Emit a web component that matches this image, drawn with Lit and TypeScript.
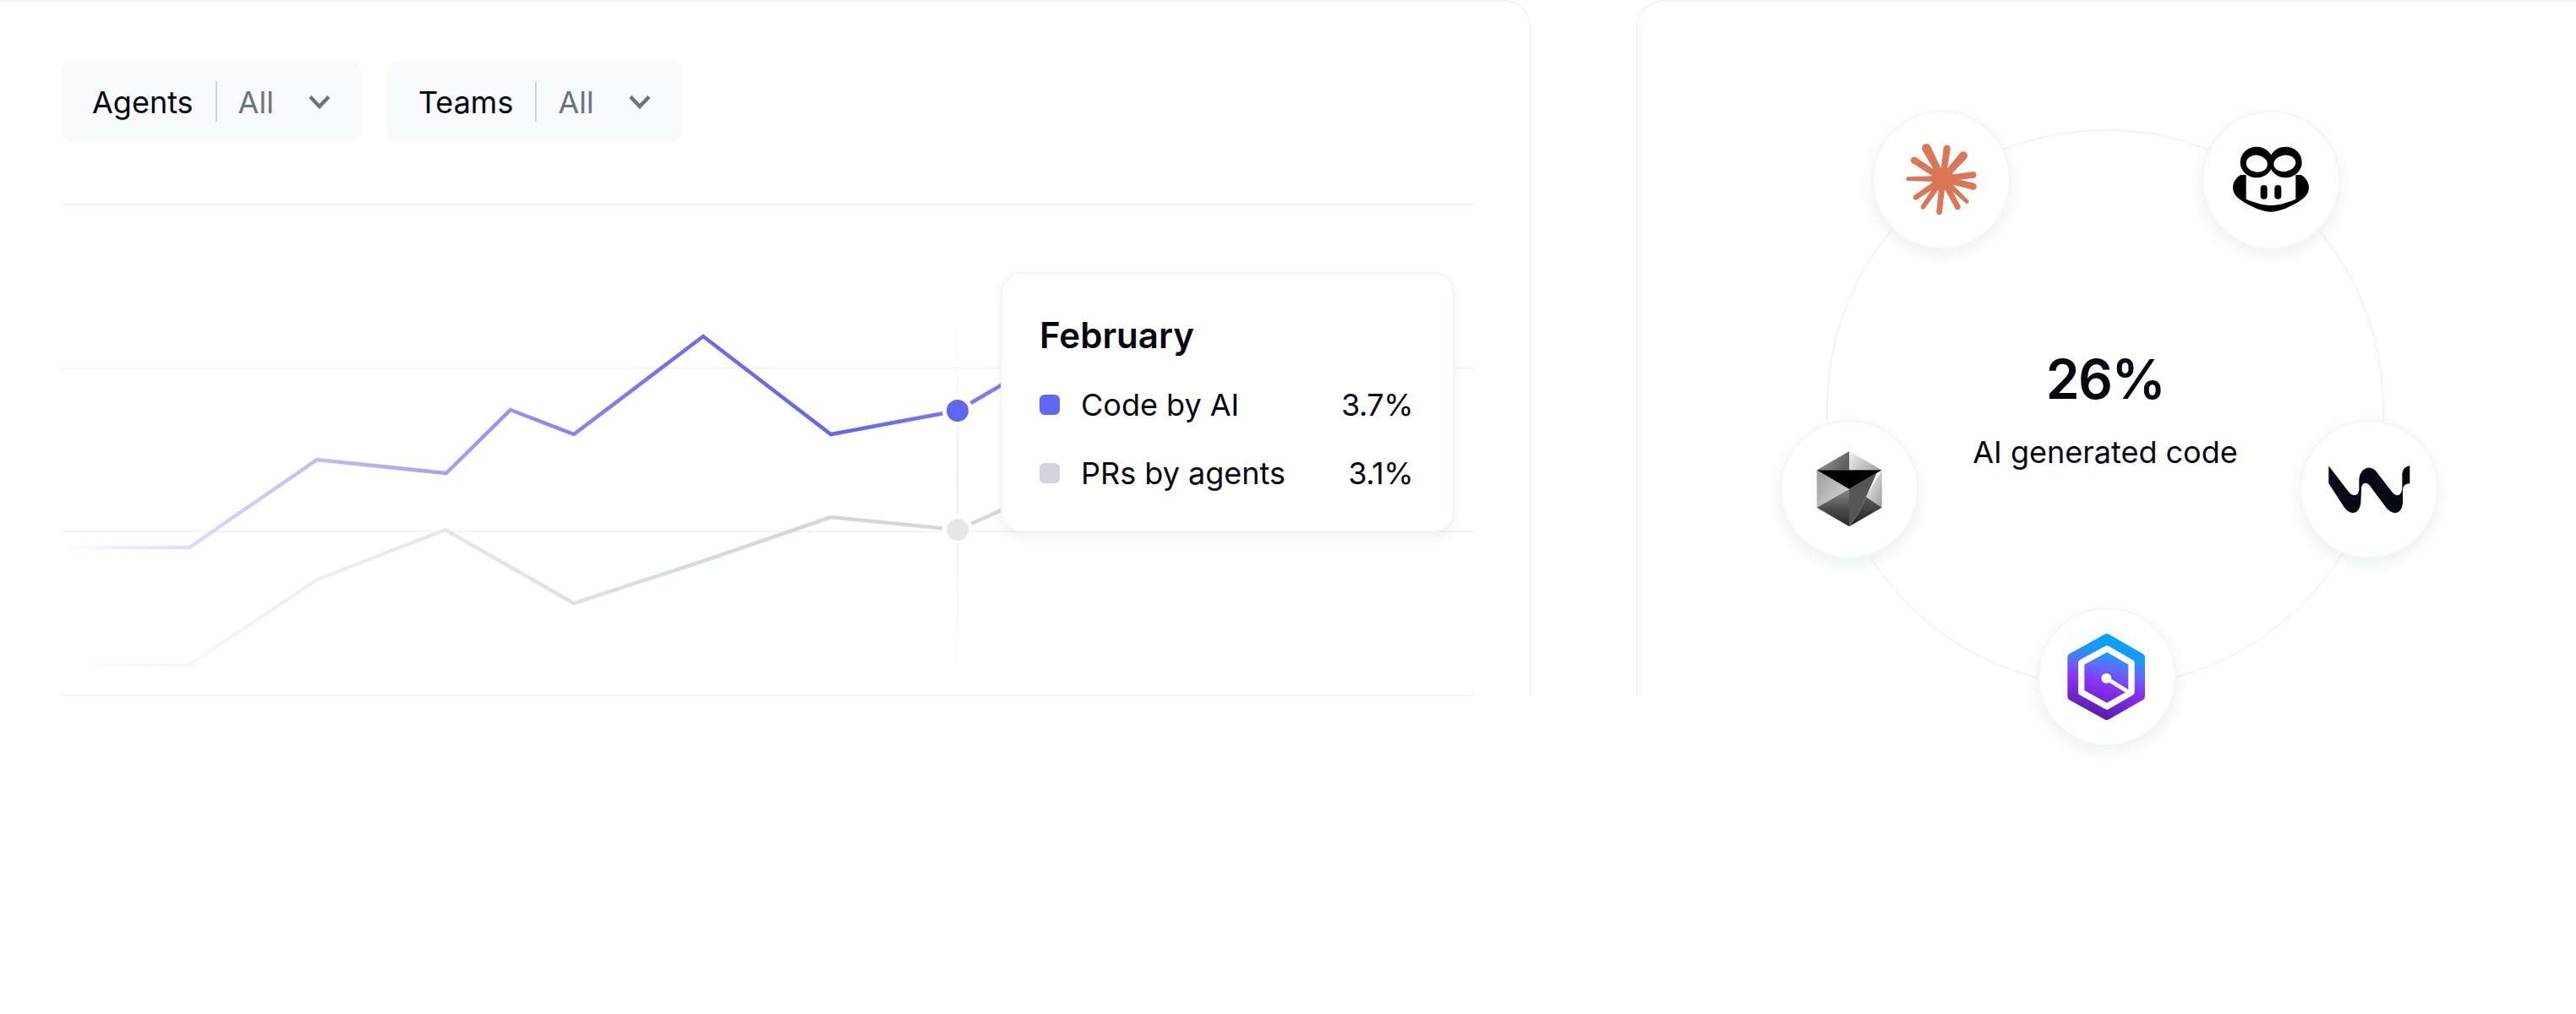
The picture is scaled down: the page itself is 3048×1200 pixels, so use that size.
import { LitElement, html, css, svg } from "lit";
import { customElement } from "lit/decorators.js";

const X0 = 72;
const Y0 = 241;
const pts = (a: number[][]) => a.map(([x, y]) => `${x - X0},${y - Y0}`).join(" ");

const purple = [[72,648],[224,648],[375,544],[528,560],[604,485],[679,514],[832,398],[983,514],[1133,486],[1260,412]];
const gray = [[72,787],[224,787],[375,686],[527,627],[679,714],[832,664],[983,612],[1133,627],[1260,570]];

const stops = (a: [number, string][]) =>
  a.map(([x, c]) => svg`<stop offset=${(x - 72) / 1200} stop-color=${c}></stop>`);

const rays: [number, number, number][] = [
  [297,197,16],[370,198,12],[428,224,15],[463,292,11],[463,333,12],[441,387,7],
  [408,406,10],[343,423,10],[285,406,8],[259,372,9],[232,306,7],[254,240,12],
];
const CX = 355, CY = 306;
function ray([tx, ty, w]: [number, number, number]) {
  const dx = tx - CX, dy = ty - CY;
  const l = Math.hypot(dx, dy);
  const nx = -dy / l, ny = dx / l;
  const b = 11;
  const d = `M${CX + nx * b} ${CY + ny * b}L${tx + nx * w} ${ty + ny * w}L${tx - nx * w} ${ty - ny * w}L${CX - nx * b} ${CY - ny * b}Z`;
  return svg`<path d=${d}></path><circle cx=${tx} cy=${ty} r=${w}></circle>`;
}

const claude = svg`<svg class="ic" viewBox="110 70 480 480" fill="#d97757">${rays.map(ray)}<circle cx="355" cy="306" r="40"></circle></svg>`;

const copilot = svg`<svg class="ic" viewBox="80 70 480 480">
  <path fill="#000" d="M212 292C195 303 185 320 185 338C185 365 212 383 235 395C265 412 295 423 320 423C345 423 375 412 405 395C428 383 455 365 455 338C455 320 445 303 428 292Z"></path>
  <path fill="#fff" d="M232 260L232 378C265 392 295 400 320 400C345 400 375 392 408 378L408 260Z"></path>
  <ellipse cx="269" cy="247" rx="58" ry="55" fill="#000"></ellipse>
  <ellipse cx="372" cy="247" rx="58" ry="55" fill="#000"></ellipse>
  <ellipse cx="270" cy="252" rx="38" ry="30" fill="#fff" transform="rotate(8 270 252)"></ellipse>
  <ellipse cx="369" cy="251" rx="39" ry="29" fill="#fff" transform="rotate(-8 369 251)"></ellipse>
  <rect x="283" y="328" width="24" height="50" rx="12" fill="#000"></rect>
  <rect x="333" y="328" width="24" height="50" rx="12" fill="#000"></rect>
</svg>`;

const cube = svg`<svg class="ic" viewBox="55 58 480 480">
  <defs>
    <linearGradient id="c1" x1="0" y1="0" x2="1" y2="0.4"><stop offset="0" stop-color="#a8a8a8"></stop><stop offset="1" stop-color="#5f5f5f"></stop></linearGradient>
    <linearGradient id="c2" x1="0" y1="0" x2="1" y2="0.4"><stop offset="0" stop-color="#f2f2f2"></stop><stop offset="1" stop-color="#a9a9a9"></stop></linearGradient>
    <linearGradient id="c3" x1="0" y1="0" x2="1" y2="1"><stop offset="0" stop-color="#9a9a9a"></stop><stop offset="1" stop-color="#dcdcdc"></stop></linearGradient>
    <linearGradient id="c4" x1="0" y1="0" x2="0" y2="1"><stop offset="0" stop-color="#8a8a8a"></stop><stop offset="0.55" stop-color="#4a4a4a"></stop><stop offset="1" stop-color="#2a2a2a"></stop></linearGradient>
    <linearGradient id="c5" x1="0" y1="0" x2="1" y2="1"><stop offset="0" stop-color="#f4f4f4"></stop><stop offset="1" stop-color="#9c9c9c"></stop></linearGradient>
    <linearGradient id="c6" x1="0" y1="0" x2="0" y2="1"><stop offset="0" stop-color="#5a5a5a"></stop><stop offset="1" stop-color="#1f1f1f"></stop></linearGradient>
  </defs>
  <polygon points="295,163 180,230 295,230" fill="url(#c1)"></polygon>
  <polygon points="295,163 411,230 295,230" fill="url(#c2)"></polygon>
  <polygon points="180,230 180,363 295,297" fill="url(#c3)"></polygon>
  <polygon points="180,363 295,297 295,430" fill="url(#c4)"></polygon>
  <polygon points="411,230 411,363 355,325" fill="url(#c5)"></polygon>
  <polygon points="355,325 411,363 295,430 330,380" fill="url(#c6)"></polygon>
  <polygon points="295,297 393,240 355,325 330,380 295,430" fill="#565656"></polygon>
  <polygon points="180,230 411,230 295,297" fill="#000"></polygon>
</svg>`;

const windsurf = svg`<svg class="ic" viewBox="70 58 480 480">
  <path fill="#050a14" d="M167 215L235 303C248 322 270 328 275 300L275 262C278 225 315 205 340 240L392 308C405 325 425 325 428 295L428 245C430 225 440 217 455 215L455 278C440 278 432 285 430 300L430 345C428 385 395 395 370 362L318 292C305 270 283 270 283 300L281 345C278 385 245 395 222 362L167 277Z"></path>
</svg>`;

const hex = svg`<svg class="ic" viewBox="100 63 480 480">
  <defs>
    <linearGradient id="h1" gradientUnits="userSpaceOnUse" x1="385" y1="165" x2="315" y2="455">
      <stop offset="0" stop-color="#00a4f7"></stop>
      <stop offset="0.22" stop-color="#1f96fb"></stop>
      <stop offset="0.38" stop-color="#5f6cf8"></stop>
      <stop offset="0.6" stop-color="#8a2ff0"></stop>
      <stop offset="1" stop-color="#561ba6"></stop>
    </linearGradient>
  </defs>
  <path d="M340 165L460 234L460 372L340 441L215 372L215 234Z" fill="url(#h1)" stroke="url(#h1)" stroke-width="30" stroke-linejoin="round"></path>
  <path d="M340 203L427 253L427 358L340 408L249 358L249 253Z" fill="none" stroke="#fff" stroke-width="22" stroke-linejoin="round"></path>
  <line x1="338" y1="308" x2="418" y2="358" stroke="#fff" stroke-width="14"></line>
  <circle cx="338" cy="308" r="18" fill="#fff"></circle>
</svg>`;

const chevron = html`<svg class="chev" viewBox="0 0 26 17" fill="none"><path d="M2 2.5L13 14L24 2.5" stroke="#6b7280" stroke-width="4.4"></path></svg>`;

@customElement("app-root")
export class AppRoot extends LitElement {
  static styles = css`
    :host { display: block; width: 3048px; height: 1200px; background: #fff; color: #030712; font-family: Inter, "Noto Sans", sans-serif; overflow: hidden; }
    .page { display: flex; align-items: flex-start; gap: 124px; }
    .card { box-sizing: border-box; height: 824px; border-top: 2px solid #f3f4f6; }
    .left { width: 1812px; border-right: 2px solid #f3f4f6; border-top-right-radius: 32px; padding: 69px 0 0 72px; }
    .right { flex: 1; border-left: 2px solid #f3f4f6; border-top-left-radius: 32px; padding: 151px 0 0 223px; }
    .filters { display: flex; gap: 31px; }
    .chip { display: flex; align-items: center; height: 97px; box-sizing: border-box; padding: 2px 36px 0 37px; background: #f9fafb; border-radius: 14px; font-size: 36px; line-height: 48px; }
    .chip .sep { width: 2px; height: 48px; margin: -2px 25px 0 26px; background: #d1d5db; }
    .chip .val { color: #6b7280; }
    .chev { width: 26px; height: 17px; margin-left: 41px; }
    .chart { position: relative; width: 1671px; height: 584px; margin-top: 73px; }
    .chart > svg { display: block; }
    .tip { position: absolute; left: 1112px; top: 81px; width: 537px; height: 308px; box-sizing: border-box; padding: 45px 47px 0 44px; background: #fff; border: 2px solid #f3f4f6; border-radius: 24px; box-shadow: 0 6px 14px rgba(17,24,39,.06); }
    .tip h3 { margin: 0; font-size: 42px; line-height: 56px; font-weight: 600; }
    .row { display: flex; align-items: center; font-size: 36px; line-height: 48px; }
    .row.a { margin-top: 30px; }
    .row.b { margin-top: 33px; }
    .sw { width: 24px; height: 24px; border-radius: 6px; margin-right: 25px; }
    .row .num { margin-left: auto; letter-spacing: -0.5px; }
    .diagram { position: relative; width: 660px; height: 660px; box-sizing: border-box; border: 2px solid #f3f4f6; border-radius: 50%; display: flex; flex-direction: column; align-items: center; justify-content: center; }
    .big { font-size: 64px; line-height: 80px; font-weight: 600; letter-spacing: -1.6px; margin-top: 2px; }
    .sub { font-size: 36px; line-height: 48px; margin-top: 22px; }
    .node { position: absolute; width: 164px; height: 164px; box-sizing: border-box; border-radius: 50%; background: #fff; border: 2px solid #f5f5f6; box-shadow: 0 6px 18px rgba(17,24,39,.07); display: flex; }
    .ic { position: absolute; left: 0; top: 0; width: 160px; height: 160px; }
    .n1 { left: 52px; top: -24px; }
    .n2 { left: 442px; top: -24px; }
    .n3 { left: -57px; top: 342px; }
    .n4 { left: 558px; top: 342px; }
    .n5 { left: 248px; top: 564px; }
  `;

  render() {
    const grid = [1, 194.5, 388, 582];
    return html`<div class="page">
      <section class="card left">
        <div class="filters">
          <div class="chip"><span>Agents</span><span class="sep"></span><span class="val">All</span>${chevron}</div>
          <div class="chip"><span>Teams</span><span class="sep"></span><span class="val">All</span>${chevron}</div>
        </div>
        <div class="chart">
          <svg width="1671" height="584" viewBox="0 0 1671 584" fill="none">
            <defs>
              <linearGradient id="gp" gradientUnits="userSpaceOnUse" x1="0" y1="0" x2="1200" y2="0">
                ${stops([[72,"#ffffff"],[224,"#dddcfa"],[375,"#c3bbf5"],[528,"#a99ff0"],[604,"#9a90ee"],[832,"#6f6aea"],[1000,"#6366f1"],[1272,"#8f88f2"]])}
              </linearGradient>
              <linearGradient id="gg" gradientUnits="userSpaceOnUse" x1="0" y1="0" x2="1200" y2="0">
                ${stops([[72,"#ffffff"],[224,"#f6f6f6"],[375,"#f0f0f0"],[527,"#e7e7e7"],[679,"#e0e1e1"],[832,"#d9dada"],[983,"#d5d6d6"],[1272,"#d8d9db"]])}
              </linearGradient>
              <linearGradient id="gc" x1="0" y1="0" x2="0" y2="1">
                <stop offset="0" stop-color="#f3f4f6" stop-opacity="0"></stop>
                <stop offset="0.45" stop-color="#eceef1"></stop>
                <stop offset="1" stop-color="#f3f4f6" stop-opacity="0"></stop>
              </linearGradient>
            </defs>
            ${grid.map((y) => svg`<line x1="0" x2="1671" y1=${y} y2=${y} stroke="#f3f4f6" stroke-width="2"></line>`)}
            <rect x="1059.5" y="130" width="3" height="440" fill="url(#gc)"></rect>
            <polyline points=${pts(gray)} stroke="url(#gg)" stroke-width="4.5"></polyline>
            <polyline points=${pts(purple)} stroke="url(#gp)" stroke-width="4.5"></polyline>
            <circle cx="1061" cy="386" r="18" fill="#fff"></circle>
            <circle cx="1061" cy="245" r="18" fill="#fff"></circle>
            <circle cx="1061" cy="245" r="13" fill="#6366f1"></circle>
            <circle cx="1061" cy="386" r="13" fill="#e5e7eb"></circle>
          </svg>
          <div class="tip">
            <h3>February</h3>
            <div class="row a"><span class="sw" style="background:#6366f1"></span><span>Code by AI</span><span class="num">3.7%</span></div>
            <div class="row b"><span class="sw" style="background:#d1d5db"></span><span>PRs by agents</span><span class="num">3.1%</span></div>
          </div>
        </div>
      </section>
      <section class="card right">
        <div class="diagram">
          <div class="big">26%</div>
          <div class="sub">AI generated code</div>
          <div class="node n1">${claude}</div>
          <div class="node n2">${copilot}</div>
          <div class="node n3">${cube}</div>
          <div class="node n4">${windsurf}</div>
          <div class="node n5">${hex}</div>
        </div>
      </section>
    </div>`;
  }
}
